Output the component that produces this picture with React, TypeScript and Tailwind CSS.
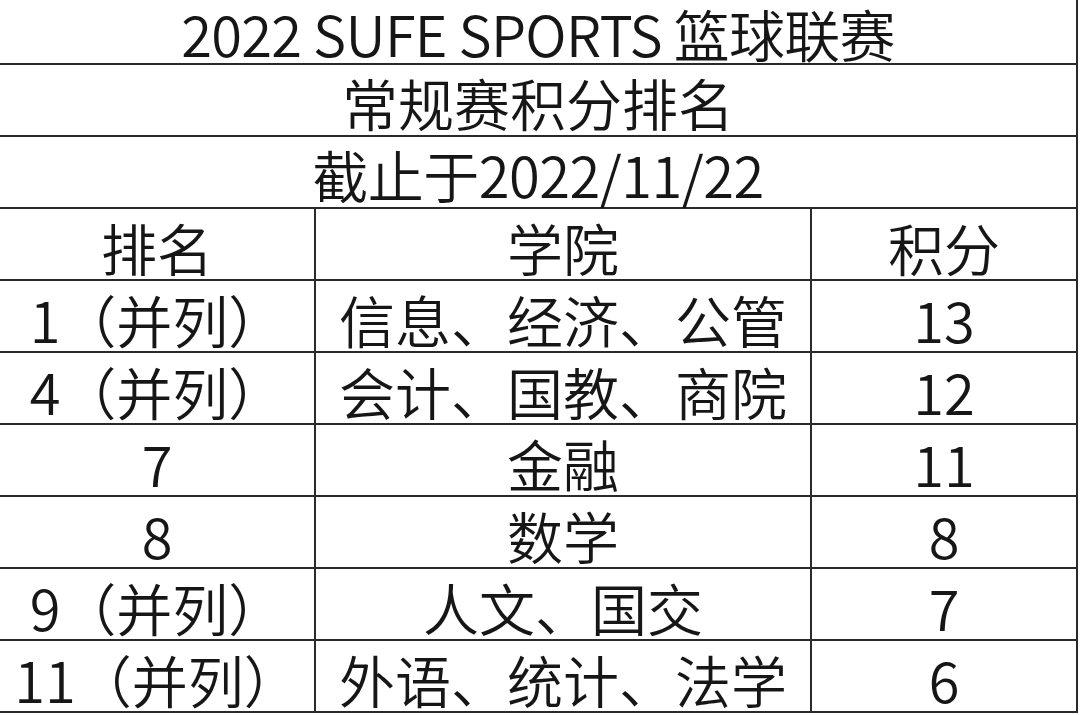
const ROWS = [
  { rank: "1（并列）", school: "信息、经济、公管", score: "13" },
  { rank: "4（并列）", school: "会计、国教、商院", score: "12" },
  { rank: "7", school: "金融", score: "11" },
  { rank: "8", school: "数学", score: "8" },
  { rank: "9（并列）", school: "人文、国交", score: "7" },
  { rank: "11（并列）", school: "外语、统计、法学", score: "6" },
];

const FONT = { fontFamily: '"Noto Sans CJK SC", "Noto Sans", sans-serif' };

export default function App() {
  return (
    <div className="w-[1080px] h-[715px] bg-white overflow-hidden" style={FONT}>
      <div className="w-[1078px] border-r-2 border-[#2a2a2a] text-[#161616] font-[350] text-[56px] leading-none">
        <div className="h-[65px] border-b-2 border-[#2a2a2a] flex items-center justify-center pt-[2px] tracking-[-0.7px]">
          2022 SUFE SPORTS 篮球联赛
        </div>
        <div className="h-[72px] border-b-2 border-[#2a2a2a] flex items-center justify-center pt-[4px]">
          常规赛积分排名
        </div>
        <div className="h-[72px] border-b-2 border-[#2a2a2a] flex items-center justify-center pt-[4px] tracking-[-0.5px]">
          截止于2022/11/22
        </div>
        <div className="grid grid-cols-[316px_496px_1fr] h-[72px] border-b-2 border-[#2a2a2a]">
          <div className="border-r-2 border-[#2a2a2a] flex items-center justify-center pt-[6px]">排名</div>
          <div className="border-r-2 border-[#2a2a2a] flex items-center justify-center pt-[6px]">学院</div>
          <div className="flex items-center justify-center pt-[6px]">积分</div>
        </div>
        {ROWS.map((r) => (
          <div key={r.rank} className="grid grid-cols-[316px_496px_1fr] h-[72px] border-b-2 border-[#2a2a2a]">
            <div className="border-r-2 border-[#2a2a2a] flex items-center justify-center pt-[6px] whitespace-nowrap">{r.rank}</div>
            <div className="border-r-2 border-[#2a2a2a] flex items-center justify-center pt-[6px] whitespace-nowrap">{r.school}</div>
            <div className="flex items-center justify-center pt-[6px]">{r.score}</div>
          </div>
        ))}
      </div>
    </div>
  );
}
